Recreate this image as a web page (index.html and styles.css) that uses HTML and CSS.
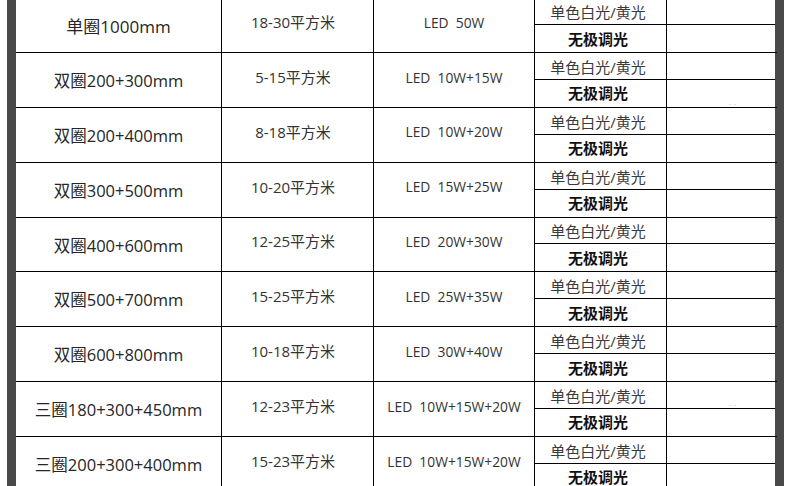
FILE: index.html
```html
<!DOCTYPE html>
<html lang="zh">
<head>
<meta charset="utf-8">
<title>规格表</title>
<link rel="stylesheet" href="styles.css">
</head>
<body>
<div class="page">
  <div class="margin-left"></div>
  <div class="strip"></div>
  <div class="table">
    <div class="row">
      <div class="cell c1 big">单圈1000mm</div>
      <div class="cell c2">18-30平方米</div>
      <div class="cell c3">LED  50W</div>
      <div class="cell c4 top">单色白光/黄光</div>
      <div class="cell c5 top"></div>
      <div class="cell c4 bottom">无极调光</div>
      <div class="cell c5 bottom"></div>
    </div>
    <div class="row">
      <div class="cell c1">双圈200+300mm</div>
      <div class="cell c2">5-15平方米</div>
      <div class="cell c3">LED  10W+15W</div>
      <div class="cell c4 top">单色白光/黄光</div>
      <div class="cell c5 top"></div>
      <div class="cell c4 bottom">无极调光</div>
      <div class="cell c5 bottom"><span class="speck">- -</span></div>
    </div>
    <div class="row">
      <div class="cell c1">双圈200+400mm</div>
      <div class="cell c2">8-18平方米</div>
      <div class="cell c3">LED  10W+20W</div>
      <div class="cell c4 top">单色白光/黄光</div>
      <div class="cell c5 top"></div>
      <div class="cell c4 bottom">无极调光</div>
      <div class="cell c5 bottom"></div>
    </div>
    <div class="row">
      <div class="cell c1">双圈300+500mm</div>
      <div class="cell c2">10-20平方米</div>
      <div class="cell c3">LED  15W+25W</div>
      <div class="cell c4 top">单色白光/黄光</div>
      <div class="cell c5 top"></div>
      <div class="cell c4 bottom">无极调光</div>
      <div class="cell c5 bottom"></div>
    </div>
    <div class="row">
      <div class="cell c1">双圈400+600mm</div>
      <div class="cell c2">12-25平方米</div>
      <div class="cell c3">LED  20W+30W</div>
      <div class="cell c4 top">单色白光/黄光</div>
      <div class="cell c5 top"></div>
      <div class="cell c4 bottom">无极调光</div>
      <div class="cell c5 bottom"></div>
    </div>
    <div class="row">
      <div class="cell c1">双圈500+700mm</div>
      <div class="cell c2">15-25平方米</div>
      <div class="cell c3">LED  25W+35W</div>
      <div class="cell c4 top">单色白光/黄光</div>
      <div class="cell c5 top"></div>
      <div class="cell c4 bottom">无极调光</div>
      <div class="cell c5 bottom"></div>
    </div>
    <div class="row">
      <div class="cell c1">双圈600+800mm</div>
      <div class="cell c2">10-18平方米</div>
      <div class="cell c3">LED  30W+40W</div>
      <div class="cell c4 top">单色白光/黄光</div>
      <div class="cell c5 top"></div>
      <div class="cell c4 bottom">无极调光</div>
      <div class="cell c5 bottom"></div>
    </div>
    <div class="row">
      <div class="cell c1">三圈180+300+450mm</div>
      <div class="cell c2">12-23平方米</div>
      <div class="cell c3">LED  10W+15W+20W</div>
      <div class="cell c4 top">单色白光/黄光</div>
      <div class="cell c5 top"><span class="speck">- -</span></div>
      <div class="cell c4 bottom">无极调光</div>
      <div class="cell c5 bottom"></div>
    </div>
    <div class="row">
      <div class="cell c1">三圈200+300+400mm</div>
      <div class="cell c2">15-23平方米</div>
      <div class="cell c3">LED  10W+15W+20W</div>
      <div class="cell c4 top">单色白光/黄光</div>
      <div class="cell c5 top"></div>
      <div class="cell c4 bottom">无极调光</div>
      <div class="cell c5 bottom"></div>
    </div>
  </div>
  <div class="strip"></div>
  <div class="margin-right"></div>
</div>
</body>
</html>
```

FILE: styles.css
```css
html, body {
  margin: 0;
  padding: 0;
  background: #ffffff;
}

body {
  font-family: "Open Sans", "Noto Sans CJK SC", sans-serif;
  color: #2a2a2a;
}

.page {
  display: flex;
  width: 790px;
  height: 486px;
  overflow: hidden;
}

.margin-left {
  width: 7px;
  flex: none;
}

.strip {
  width: 9px;
  flex: none;
  background: #494949;
  position: relative;
  z-index: 0;
}

.margin-right {
  flex: 1;
}

.table {
  width: 759px;
  flex: none;
  margin-top: -1.857px;
  position: relative;
  z-index: 1;
}

.row {
  box-sizing: border-box;
  height: 54.857px;
  display: grid;
  grid-template-columns: 206px 152px 161px 132px 108px;
  grid-template-rows: 1fr 1fr;
  border-bottom: 1px solid #000;
  position: relative;
}

.row::after {
  content: "";
  position: absolute;
  left: 100%;
  bottom: -1px;
  width: 2px;
  height: 1px;
  background: #000;
}

.cell {
  box-sizing: border-box;
  display: flex;
  align-items: center;
  justify-content: center;
  white-space: pre;
  line-height: 1.2;
  min-height: 0;
}

.c1, .c2, .c3 {
  grid-row: span 2;
  border-right: 1px solid #000;
}

.c1 {
  font-size: 16.5px;
  color: #262626;
  padding-top: 2px;
}

.c1.big {
  font-size: 17px;
  padding-top: 5px;
}

.c2 {
  font-size: 15px;
  color: #333;
  padding-right: 9px;
  padding-bottom: 6px;
}

.c3 {
  font-size: 13.8px;
  color: #333;
  padding-bottom: 4px;
}

.c4 {
  border-right: 1px solid #000;
  font-size: 15px;
  color: #3a3a3a;
  padding-right: 5px;
}

.c4.top {
  padding-top: 2px;
}

.c4.bottom {
  font-weight: bold;
  color: #111;
  padding-top: 0;
}

.top {
  border-bottom: 1px solid #000;
}

.c5 {
  position: relative;
}

.speck {
  position: absolute;
  left: 62px;
  bottom: 0;
  font-size: 8px;
  color: #c8c8c8;
  line-height: 1;
}
```
